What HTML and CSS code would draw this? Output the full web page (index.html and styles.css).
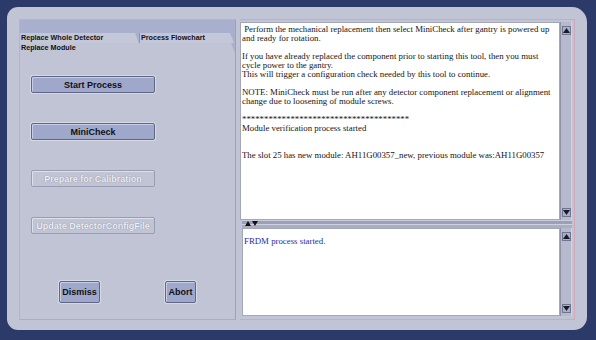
FILE: index.html
```html
<!DOCTYPE html>
<html lang="en">
<head>
    <meta charset="UTF-8">
    <title>Replace Module</title>
    <link rel="stylesheet" href="styles.css">
</head>
<body>
    <div class="frame">
        <div class="left-panel">
            <div class="tab-strip"></div>
            <div class="tab-row">
                <div class="tab tab-first">Replace Whole Detector</div>
                <div class="tab tab-second">Process Flowchart</div>
            </div>
            <div class="tab-row">
                <div class="tab tab-active">Replace Module</div>
            </div>

            <div class="actions">
                <button class="btn btn-wide">Start Process</button>
                <button class="btn btn-wide">MiniCheck</button>
                <button class="btn btn-wide" disabled>Prepare for Calibration</button>
                <button class="btn btn-wide" disabled>Update DetectorConfigFile</button>
            </div>

            <div class="footer-btns">
                <button class="btn btn-dismiss">Dismiss</button>
                <button class="btn btn-abort">Abort</button>
            </div>
        </div>

        <div class="right-panel">
            <div class="pane pane-top">
                <div class="log">
                    <p>&nbsp;Perform the mechanical replacement then select MiniCheck after gantry is powered up<br>and ready for rotation.</p>
                    <p>&nbsp;</p>
                    <p>If you have already replaced the component prior to starting this tool, then you must<br>cycle power to the gantry.<br>This will trigger a configuration check needed by this tool to continue.</p>
                    <p>&nbsp;</p>
                    <p>NOTE: MiniCheck must be run after any detector component replacement or alignment<br>change due to loosening of module screws.</p>
                    <p>&nbsp;</p>
                    <p>**************************************</p>
                    <p>Module verification process started</p>
                    <p>&nbsp;</p>
                    <p>&nbsp;</p>
                    <p>The slot 25 has new module: AH11G00357_new, previous module was:AH11G00357</p>
                </div>
                <div class="scrollbar">
                    <span class="arrow">
                        <svg width="7" height="5" viewBox="0 0 7 5"><path d="M0 5 L3.5 0 L7 5 Z" fill="#1a1a22"/></svg>
                    </span>
                    <span class="arrow">
                        <svg width="7" height="5" viewBox="0 0 7 5"><path d="M0 0 L7 0 L3.5 5 Z" fill="#1a1a22"/></svg>
                    </span>
                </div>
            </div>

            <div class="splitter">
                <svg width="14" height="5" viewBox="0 0 14 5">
                    <path d="M0 5 L3 0 L6 5 Z" fill="#111"/>
                    <path d="M7 0 L13 0 L10 5 Z" fill="#111"/>
                </svg>
            </div>

            <div class="pane pane-bottom">
                <div class="log log-blue">
                    <p>FRDM process started.</p>
                </div>
                <div class="scrollbar">
                    <span class="arrow">
                        <svg width="7" height="5" viewBox="0 0 7 5"><path d="M0 5 L3.5 0 L7 5 Z" fill="#1a1a22"/></svg>
                    </span>
                    <span class="arrow">
                        <svg width="7" height="5" viewBox="0 0 7 5"><path d="M0 0 L7 0 L3.5 5 Z" fill="#1a1a22"/></svg>
                    </span>
                </div>
            </div>
        </div>
    </div>
</body>
</html>
```

FILE: styles.css
```css
:root {
    --navy: #2c3a69;
    --panel: #c1c4d4;
    --strip: #a9b0ce;
    --pink: #d3a7b7;
    --btn: #9fa8cb;
}

* {
    margin: 0;
    padding: 0;
    box-sizing: border-box;
}

body {
    width: 596px;
    height: 340px;
    overflow: hidden;
    background: var(--navy);
    font-family: "Liberation Sans", Arial, sans-serif;
}

.frame {
    margin: 7px 9px 0 7px;
    height: 323px;
    background: var(--panel);
    border-radius: 11px 15px 13px 11px;
    padding: 12px 12px 10px 12px;
    display: flex;
    gap: 4px;
}

/* left side: tabs + actions */
.left-panel {
    width: 217px;
    display: flex;
    flex-direction: column;
    border: 1px solid var(--pink);
    border-right-color: #9ea2b6;
    border-bottom-color: #b7a9b8;
}

.tab-strip {
    height: 13px;
    background: var(--strip);
}

.tab-row {
    height: 10px;
    display: flex;
    background: var(--strip);
}

.tab {
    font-size: 7.2px;
    font-weight: bold;
    line-height: 10px;
    color: #111;
    padding-left: 1px;
    white-space: nowrap;
    clip-path: polygon(0 0, calc(100% - 4px) 0, 100% 100%, 0 100%);
}

.tab-first {
    width: 119px;
    background: #c4c7d8;
}

.tab-second {
    width: 95px;
    background: #c4c7d8;
    border-left: 1px solid #8e93ad;
}

.tab-active {
    width: 215px;
    background: var(--panel);
}

.actions {
    display: flex;
    flex-direction: column;
    gap: 30px;
    padding: 23px 0 0 11px;
}

.btn {
    font-family: "Liberation Sans", Arial, sans-serif;
    font-size: 9px;
    font-weight: bold;
    color: #111;
    background: var(--btn);
    border: 1px solid #5f6686;
    border-radius: 2px;
    box-shadow: inset 1px 1px 0 #c9cee6, 0 0 0 1px #d6d9e6;
    cursor: pointer;
}

.btn-wide {
    width: 124px;
    height: 17px;
}

.btn:disabled {
    background: var(--panel);
    border-color: #999db2;
    box-shadow: inset 1px 1px 0 #dfe1ea;
    color: #eef0f5;
    text-shadow: 0 0 1px #6f748c;
    cursor: default;
}

.footer-btns {
    display: flex;
    gap: 65px;
    padding: 47px 0 0 39px;
}

.btn-dismiss {
    width: 41px;
    height: 22px;
}

.btn-abort {
    width: 31px;
    height: 22px;
}

/* right side: log panes */
.right-panel {
    width: 335px;
    display: flex;
    flex-direction: column;
    border: 1px solid var(--pink);
    border-left: none;
    padding: 2px 2px 3px 0;
}

.pane {
    display: flex;
}

.pane-top {
    height: 198px;
}

.pane-bottom {
    height: 88px;
    padding-left: 2px;
}

.log {
    flex: 1;
    background: #fff;
    border: 1px solid #a3a7ba;
    padding: 2px 1px;
    font-family: "Liberation Serif", "Times New Roman", serif;
    font-size: 8.8px;
    line-height: 9px;
    color: #141414;
    overflow: hidden;
    white-space: nowrap;
}

.log-blue {
    color: #2b2ba6;
    padding-top: 8px;
}

.scrollbar {
    width: 12px;
    background: #b6bacc;
    border-left: 1px solid #8f93a8;
    border-right: 1px solid #d2d4df;
    display: flex;
    flex-direction: column;
    justify-content: space-between;
    align-items: center;
    padding: 4px 0 3px;
}

.arrow {
    width: 9px;
    height: 9px;
    background: #a9afca;
    border: 1px solid #6f7590;
    display: flex;
    align-items: center;
    justify-content: center;
}

.splitter {
    height: 8px;
    margin: 0 0 0 2px;
    background: linear-gradient(#c9ccd9 0, #c9ccd9 1px, #9aa0b8 1px, #9aa0b8 4px, #cfd2de 4px, #cfd2de 5px, #a9aec3 5px);
    padding: 1px 0 0 3px;
    display: flex;
    align-items: flex-start;
}
```
